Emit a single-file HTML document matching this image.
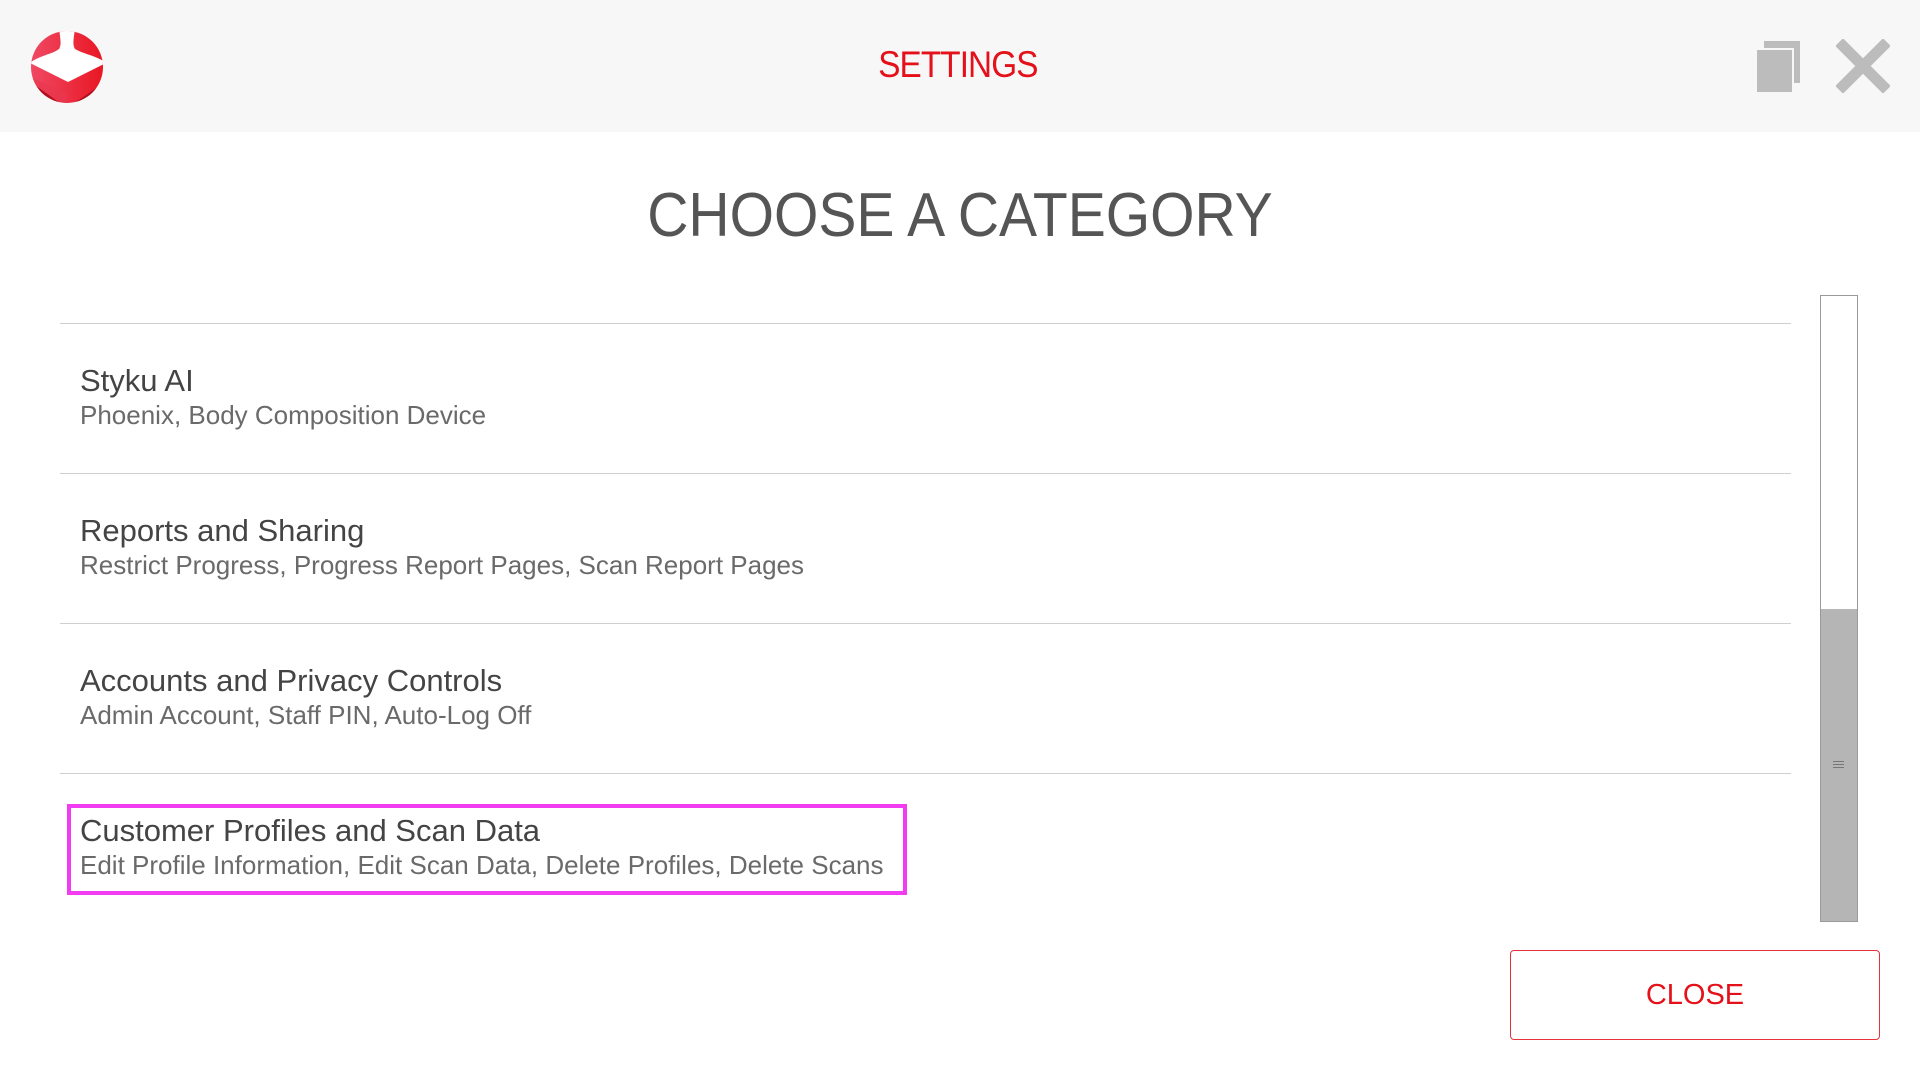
<!DOCTYPE html>
<html><head><meta charset="utf-8"><style>
*{margin:0;padding:0;box-sizing:border-box}
body{width:1920px;height:1080px;background:#fff;position:relative;overflow:hidden;font-family:"Liberation Sans",sans-serif}
.hdr{position:absolute;left:0;top:0;width:1920px;height:132px;background:#f7f7f7}
.abs{position:absolute;white-space:nowrap}
.line{position:absolute;left:60px;width:1731px;height:1px;background:#cfcfcf}
.t{position:absolute;left:80px;font-size:31px;color:#444;white-space:nowrap}
.s{position:absolute;left:80px;font-size:26px;color:#6a6a6a;white-space:nowrap}
</style></head><body>
<div class="hdr"></div>
<svg class="abs" style="left:28px;top:28px" width="80" height="80" viewBox="0 0 80 80">
<defs>
<linearGradient id="g1" x1="0" y1="0" x2="1" y2="0"><stop offset="0" stop-color="#f04a66"/><stop offset="1" stop-color="#e8141f"/></linearGradient>
<clipPath id="c"><circle cx="39" cy="39" r="36"/></clipPath>
</defs>
<g clip-path="url(#c)">
<rect x="0" y="0" width="80" height="80" fill="url(#g1)"/>
<path d="M0 52 L39 80 L80 52 L80 80 L0 80Z" fill="#b0101c"/>
<path d="M0 52 L39 80 L39 66 L0 48Z" fill="#e8384f" opacity=".7"/>
<path d="M31 0 L47 0 C46 10 44 16 47 21 C55 26 70 28 78 35 L40 54 L2 35 C10 28 25 26 31 21 C34 16 32 10 31 0Z" fill="#fff"/>
</g>
</svg>
<div class="abs" style="left:870px;top:44px;width:164px;text-align:center;font-size:37px;color:#e4111b;letter-spacing:-1px;transform:scaleX(.9)">SETTINGS</div>
<div class="abs" style="left:1764px;top:41px;width:36px;height:42px;background:#bcbcbc"></div>
<div class="abs" style="left:1755px;top:48px;width:39px;height:45px;background:#f7f7f7"></div>
<div class="abs" style="left:1757px;top:50px;width:35px;height:42px;background:#bcbcbc"></div>
<svg class="abs" style="left:1836px;top:39px" width="54" height="54" viewBox="0 0 54 54"><path d="M7 7 L47 47 M47 7 L7 47" stroke="#bcbcbc" stroke-width="11" stroke-linecap="square"/></svg>
<div class="abs" style="left:0;top:180px;width:1920px;text-align:center;font-size:62px;color:#555"><span style="display:inline-block;transform:scaleX(.92)">CHOOSE A CATEGORY</span></div>

<div class="line" style="top:323px"></div>
<div class="t" style="top:363px">Styku AI</div>
<div class="s" style="top:400px">Phoenix, Body Composition Device</div>
<div class="line" style="top:473px"></div>
<div class="t" style="top:513px">Reports and Sharing</div>
<div class="s" style="top:550px">Restrict Progress, Progress Report Pages, Scan Report Pages</div>
<div class="line" style="top:623px"></div>
<div class="t" style="top:663px">Accounts and Privacy Controls</div>
<div class="s" style="top:700px">Admin Account, Staff PIN, Auto-Log Off</div>
<div class="line" style="top:773px"></div>
<div class="t" style="top:813px">Customer Profiles and Scan Data</div>
<div class="s" style="top:850px">Edit Profile Information, Edit Scan Data, Delete Profiles, Delete Scans</div>
<div class="abs" style="left:67px;top:804px;width:840px;height:91px;border:4px solid #f23cf2"></div>

<div class="abs" style="left:1820px;top:295px;width:38px;height:627px;border:1px solid #9a9a9a;background:#fff"></div>
<div class="abs" style="left:1821px;top:609px;width:36px;height:312px;background:#b5b5b5"></div>
<div class="abs" style="left:1833px;top:761px;width:11px;height:1px;background:#777;box-shadow:0 3px 0 #777,0 6px 0 #777"></div>

<div class="abs" style="left:1510px;top:950px;width:370px;height:90px;border:1px solid #e6323a;border-radius:4px;text-align:center;line-height:88px;font-size:29px;color:#e4111b">CLOSE</div>
</body></html>
